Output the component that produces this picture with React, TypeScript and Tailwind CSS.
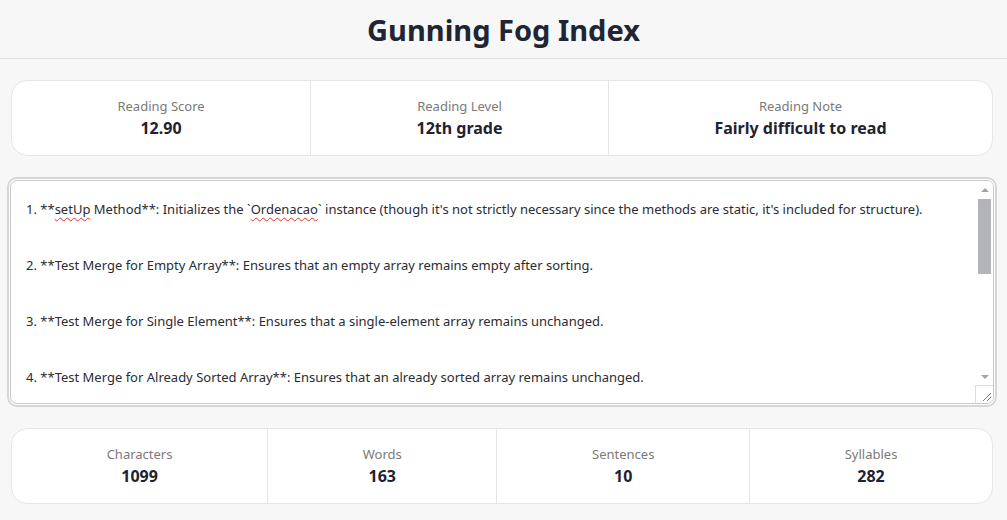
import React from "react";

const font = { fontFamily: '"Noto Sans", "Open Sans", sans-serif' };

function Stat({ label, value }: { label: string; value: string }) {
  return (
    <div className="flex-auto flex flex-col items-center py-[15px] border-l border-[#e6e6e6] first:border-l-0">
      <div className="text-[13px] leading-[20px] text-[#7a7a7a]">{label}</div>
      <div className="text-[16px] leading-[24px] font-bold text-[#1f2230]">{value}</div>
    </div>
  );
}

function Squiggle({ children }: { children: React.ReactNode }) {
  return (
    <span className="underline decoration-wavy decoration-[#e0302a] decoration-1 underline-offset-[3px]">
      {children}
    </span>
  );
}

export default function App() {
  return (
    <div className="min-h-[520px] bg-[#f7f7f7]" style={font}>
      <header className="h-[59px] border-b border-[#e2e2e2] flex items-center justify-center">
        <h1 className="text-[29px] font-bold text-[#1f2533] leading-none">Gunning Fog Index</h1>
      </header>
      <main className="pl-[11px] pr-[14px] pt-[21px] flex flex-col gap-[21px]">
        <div className="flex bg-white border border-[#e6e6e6] rounded-[16px]">
          <Stat label="Reading Score" value="12.90" />
          <Stat label="Reading Level" value="12th grade" />
          <Stat label="Reading Note" value="Fairly difficult to read" />
        </div>

        <div className="-mx-[4px] border-2 border-[#d6d6d6] rounded-[10px] p-px bg-white">
          <div className="relative h-[224px] border border-[#c8c8c8] rounded-[7px] overflow-hidden bg-white">
            <div className="pl-[15px] pr-[30px] pt-[14px] text-[13px] leading-[28px] text-[#2b2b33] whitespace-pre-wrap">
              {"1. **"}
              <Squiggle>setUp</Squiggle>
              {" Method**: Initializes the `"}
              <Squiggle>Ordenacao</Squiggle>
              {"` instance (though it's not strictly necessary since the methods are static, it's included for structure).\n\n2. **Test Merge for Empty Array**: Ensures that an empty array remains empty after sorting.\n\n3. **Test Merge for Single Element**: Ensures that a single-element array remains unchanged.\n\n4. **Test Merge for Already Sorted Array**: Ensures that an already sorted array remains unchanged.\n\n5. **Test Merge for Reverse Sorted Array**: Ensures that a reverse sorted array is sorted correctly."}
            </div>
            {/* fake scrollbar */}
            <div className="absolute right-0 top-0 w-[17px] h-[204px] bg-white flex flex-col items-center">
              <div className="h-[17px] w-full flex items-center justify-center">
                <div className="w-0 h-0 border-l-[4px] border-r-[4px] border-b-[4px] border-l-transparent border-r-transparent border-b-[#a3a3a3]" />
              </div>
              <div className="mt-px w-[13px] h-[75px] bg-[#b2b4b7]" />
              <div className="flex-1" />
              <div className="h-[17px] w-full flex items-center justify-center">
                <div className="w-0 h-0 border-l-[4px] border-r-[4px] border-t-[4px] border-l-transparent border-r-transparent border-t-[#a3a3a3]" />
              </div>
            </div>
            <div className="absolute right-0 bottom-0 w-[18px] h-[18px] border-l border-t border-[#dcdcdc] bg-white">
              <svg width="17" height="17" viewBox="0 0 17 17" className="absolute left-0 top-0">
                <line x1="7" y1="15" x2="15" y2="7" stroke="#7a7a7a" strokeWidth="1" />
                <line x1="11" y1="15" x2="15" y2="11" stroke="#7a7a7a" strokeWidth="1" />
              </svg>
            </div>
          </div>
        </div>

        <div className="flex bg-white border border-[#e6e6e6] rounded-[16px]">
          <Stat label="Characters" value="1099" />
          <Stat label="Words" value="163" />
          <Stat label="Sentences" value="10" />
          <Stat label="Syllables" value="282" />
        </div>
      </main>
    </div>
  );
}
